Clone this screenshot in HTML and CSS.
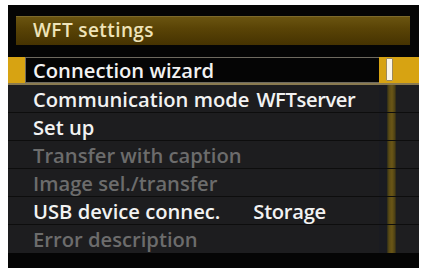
FILE: index.html
```html
<!DOCTYPE html>
<html>
<head>
<meta charset="utf-8">
<link rel="stylesheet" href="styles.css">
</head>
<body>
<div class="screen">
  <div class="title">WFT settings</div>
  <div class="list">
    <div class="row sel">
      <div class="gut"></div>
      <div class="cell"><span class="label">Connection wizard</span></div>
      <div class="sb"><div class="thumb"></div></div>
    </div>
    <div class="row">
      <div class="gut"></div>
      <div class="cell"><span class="label">Communication mode</span><span class="val v1">WFTserver</span></div>
      <div class="sb"><div class="track"></div></div>
    </div>
    <div class="row">
      <div class="gut"></div>
      <div class="cell"><span class="label">Set up</span></div>
      <div class="sb"><div class="track"></div></div>
    </div>
    <div class="row dis">
      <div class="gut"></div>
      <div class="cell"><span class="label">Transfer with caption</span></div>
      <div class="sb"><div class="track"></div></div>
    </div>
    <div class="row dis">
      <div class="gut"></div>
      <div class="cell"><span class="label">Image sel./transfer</span></div>
      <div class="sb"><div class="track"></div></div>
    </div>
    <div class="row">
      <div class="gut"></div>
      <div class="cell"><span class="label">USB device connec.</span><span class="val v2">Storage</span></div>
      <div class="sb"><div class="track"></div></div>
    </div>
    <div class="row dis last">
      <div class="gut"></div>
      <div class="cell"><span class="label">Error description</span></div>
      <div class="sb"><div class="track"></div></div>
    </div>
  </div>
</div>
</body>
</html>
```
FILE: styles.css
```css
html, body {
  margin: 0;
  padding: 0;
  background: #ffffff;
}
.screen {
  margin: 5px 0 0 8px;
  width: 411px;
  height: 263px;
  background: #050505;
  font-family: "Open Sans", "Liberation Sans", sans-serif;
  font-weight: 600;
  display: flex;
  flex-direction: column;
}
.title {
  margin: 11px 9px 0 8px;
  height: 29px;
  box-sizing: border-box;
  padding-left: 17px;
  border-top: 1px solid #7d6a2c;
  background: linear-gradient(to bottom, #6a5410 0%, #5a4406 40%, #463301 100%);
  color: #eee3b8;
  font-size: 19px;
  line-height: 27px;
  letter-spacing: 0.4px;
}
.list {
  margin-top: 12px;
  display: flex;
  flex-direction: column;
}
.row {
  height: 28px;
  display: flex;
  background: #1d1d1f;
  border-bottom: 1px solid #0d0d0d;
  box-sizing: border-box;
  color: #f2f2f2;
}
.row.last {
  border-bottom: none;
}
.gut {
  width: 17px;
}
.cell {
  width: 354px;
  display: flex;
  align-items: center;
  padding-left: 8px;
  box-sizing: border-box;
  font-size: 20.2px;
  letter-spacing: 0;
  white-space: nowrap;
}
.val.v1 {
  margin-left: 7px;
  letter-spacing: -0.4px;
}
.val.v2 {
  margin-left: 33px;
  letter-spacing: -0.3px;
}
.sb {
  flex: 1;
  position: relative;
  background: linear-gradient(to right, #1a1b21 0, #1a1b21 15px, #1e1e20 15px);
}
.track {
  position: absolute;
  left: 8px;
  top: 0;
  bottom: 0;
  width: 9px;
  background: linear-gradient(to right, #2a2a1a 0, #5a4a14 2px, #6a5616 5px, #4a3e14 8px, #26241a 9px);
}
.row.dis {
  color: #6c6c6c;
}
.row.sel {
  background: #d7a312;
  border-bottom: 2px solid #8a7a50;
}
.row.sel .cell {
  background: #050505;
  border: 1px solid #6e6a60;
  border-right: none;
  padding-left: 7px;
}
.row.sel .sb {
  background: #d7a312;
}
.thumb {
  position: absolute;
  left: 7px;
  top: 1px;
  width: 5px;
  height: 21px;
  background: #fbf6e8;
  border: 1px solid #9a8a60;
  border-radius: 1px;
}
```
